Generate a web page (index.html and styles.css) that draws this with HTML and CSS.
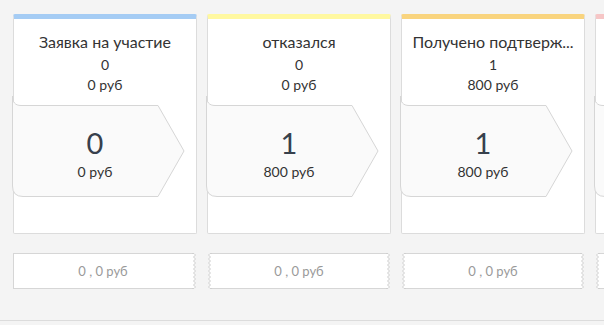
FILE: index.html
```html
<!DOCTYPE html>
<html>
<head>
  <title>Воронка</title>
  <link rel="stylesheet" href="styles.css">
</head>
<body>

<div class="board">

<div class="stages">

<div class="col">
  <div class="card bar-blue">
    <div class="title">Заявка на участие</div>
    <div class="line">0</div>
    <div class="line">0 руб</div>
    <div class="stage">
      <svg class="shape" width="175" height="94"><path d="M1.5,-8 C1.5,-2 4,1.5 10,1.5 L147,1.5 L173,47 L147,92.5 L12,92.5 Q1.5,92.5 1.5,82 Z"/></svg>
      <div class="big">0</div>
      <div class="line">0 руб</div>
    </div>
  </div>
  <div class="sum first">
    <span class="sum-text">0 , 0 руб</span>
    <svg class="edge" width="5" height="36"><polygon class="fill" points="0,0 2,0 3.5,2 1.5,4 3.5,6 1.5,8 3.5,10 1.5,12 3.5,14 1.5,16 3.5,18 1.5,20 3.5,22 1.5,24 3.5,26 1.5,28 3.5,30 1.5,32 3.5,34 2,36 0,36"/><polyline class="zig" points="0,0.5 2,0.5 3.5,2 1.5,4 3.5,6 1.5,8 3.5,10 1.5,12 3.5,14 1.5,16 3.5,18 1.5,20 3.5,22 1.5,24 3.5,26 1.5,28 3.5,30 1.5,32 3.5,34 2,35.5 0,35.5"/></svg>
  </div>
</div>

<div class="col">
  <div class="card bar-yellow">
    <div class="title">отказался</div>
    <div class="line">0</div>
    <div class="line">0 руб</div>
    <div class="stage">
      <svg class="shape" width="175" height="94"><path d="M1.5,-8 C1.5,-2 4,1.5 10,1.5 L147,1.5 L173,47 L147,92.5 L12,92.5 Q1.5,92.5 1.5,82 Z"/></svg>
      <div class="big">1</div>
      <div class="line">800 руб</div>
    </div>
  </div>
  <div class="sum">
    <svg class="edge" width="5" height="36"><polygon class="fill" points="5,0 3,0 1.5,2 3.5,4 1.5,6 3.5,8 1.5,10 3.5,12 1.5,14 3.5,16 1.5,18 3.5,20 1.5,22 3.5,24 1.5,26 3.5,28 1.5,30 3.5,32 1.5,34 3,36 5,36"/><polyline class="zig" points="5,0.5 3,0.5 1.5,2 3.5,4 1.5,6 3.5,8 1.5,10 3.5,12 1.5,14 3.5,16 1.5,18 3.5,20 1.5,22 3.5,24 1.5,26 3.5,28 1.5,30 3.5,32 1.5,34 3,35.5 5,35.5"/></svg>
    <span class="sum-text">0 , 0 руб</span>
    <svg class="edge" width="5" height="36"><polygon class="fill" points="0,0 2,0 3.5,2 1.5,4 3.5,6 1.5,8 3.5,10 1.5,12 3.5,14 1.5,16 3.5,18 1.5,20 3.5,22 1.5,24 3.5,26 1.5,28 3.5,30 1.5,32 3.5,34 2,36 0,36"/><polyline class="zig" points="0,0.5 2,0.5 3.5,2 1.5,4 3.5,6 1.5,8 3.5,10 1.5,12 3.5,14 1.5,16 3.5,18 1.5,20 3.5,22 1.5,24 3.5,26 1.5,28 3.5,30 1.5,32 3.5,34 2,35.5 0,35.5"/></svg>
  </div>
</div>

<div class="col">
  <div class="card bar-orange">
    <div class="title">Получено подтверж...</div>
    <div class="line">1</div>
    <div class="line">800 руб</div>
    <div class="stage">
      <svg class="shape" width="175" height="94"><path d="M1.5,-8 C1.5,-2 4,1.5 10,1.5 L147,1.5 L173,47 L147,92.5 L12,92.5 Q1.5,92.5 1.5,82 Z"/></svg>
      <div class="big">1</div>
      <div class="line">800 руб</div>
    </div>
  </div>
  <div class="sum">
    <svg class="edge" width="5" height="36"><polygon class="fill" points="5,0 3,0 1.5,2 3.5,4 1.5,6 3.5,8 1.5,10 3.5,12 1.5,14 3.5,16 1.5,18 3.5,20 1.5,22 3.5,24 1.5,26 3.5,28 1.5,30 3.5,32 1.5,34 3,36 5,36"/><polyline class="zig" points="5,0.5 3,0.5 1.5,2 3.5,4 1.5,6 3.5,8 1.5,10 3.5,12 1.5,14 3.5,16 1.5,18 3.5,20 1.5,22 3.5,24 1.5,26 3.5,28 1.5,30 3.5,32 1.5,34 3,35.5 5,35.5"/></svg>
    <span class="sum-text">0 , 0 руб</span>
    <svg class="edge" width="5" height="36"><polygon class="fill" points="0,0 2,0 3.5,2 1.5,4 3.5,6 1.5,8 3.5,10 1.5,12 3.5,14 1.5,16 3.5,18 1.5,20 3.5,22 1.5,24 3.5,26 1.5,28 3.5,30 1.5,32 3.5,34 2,36 0,36"/><polyline class="zig" points="0,0.5 2,0.5 3.5,2 1.5,4 3.5,6 1.5,8 3.5,10 1.5,12 3.5,14 1.5,16 3.5,18 1.5,20 3.5,22 1.5,24 3.5,26 1.5,28 3.5,30 1.5,32 3.5,34 2,35.5 0,35.5"/></svg>
  </div>
</div>

<div class="col">
  <div class="card bar-pink">
    <div class="title">&nbsp;</div>
    <div class="line">&nbsp;</div>
    <div class="line">&nbsp;</div>
    <div class="stage">
      <svg class="shape" width="175" height="94"><path d="M1.5,-8 C1.5,-2 4,1.5 10,1.5 L147,1.5 L173,47 L147,92.5 L12,92.5 Q1.5,92.5 1.5,82 Z"/></svg>
      <div class="big">&nbsp;</div>
      <div class="line">&nbsp;</div>
    </div>
  </div>
  <div class="sum">
    <svg class="edge" width="5" height="36"><polygon class="fill" points="5,0 3,0 1.5,2 3.5,4 1.5,6 3.5,8 1.5,10 3.5,12 1.5,14 3.5,16 1.5,18 3.5,20 1.5,22 3.5,24 1.5,26 3.5,28 1.5,30 3.5,32 1.5,34 3,36 5,36"/><polyline class="zig" points="5,0.5 3,0.5 1.5,2 3.5,4 1.5,6 3.5,8 1.5,10 3.5,12 1.5,14 3.5,16 1.5,18 3.5,20 1.5,22 3.5,24 1.5,26 3.5,28 1.5,30 3.5,32 1.5,34 3,35.5 5,35.5"/></svg>
    <span class="sum-text">&nbsp;</span>
  </div>
</div>

</div>

<div class="footer"></div>

</div>

</body>
</html>
```

FILE: styles.css
```css
body { margin: 0; background: #f4f4f4; font-family: Lato, "Open Sans", "DejaVu Sans", sans-serif; color: #333; }

.board { width: 604px; height: 325px; overflow: hidden; }
.stages { display: flex; gap: 10px; padding: 14px 0 0 13px; }
.col { flex: 0 0 184px; width: 184px; }

.card { background: #fff; border: 1px solid #dcdcdc; border-top: 5px solid #a5ccf4; border-radius: 2px; text-align: center; height: 214px; }
.bar-blue { border-top-color: #a5ccf4; }
.bar-yellow { border-top-color: #fff8a0; }
.bar-orange { border-top-color: #f9d47e; }
.bar-pink { border-top-color: #f6c6c6; }

.title { margin: 13px 10px 3px; font-size: 16px; line-height: 20px; white-space: nowrap; overflow: hidden; }
.line { font-size: 14px; line-height: 20px; }

.stage { position: relative; height: 94px; margin: 9px 0 0 -3px; padding-right: 3px; }
.stage .shape { position: absolute; left: 0; top: 0; overflow: visible; }
.shape path { fill: #fafafa; stroke: #d6d6d6; stroke-width: 1; }
.stage .big, .stage .line { position: relative; width: 168px; }
.big { padding-top: 22px; font-size: 29px; line-height: 34px; color: #37404c; }
.stage .line { margin-top: 2px; }

.sum { display: flex; height: 36px; margin-top: 19px; }
.sum-text { flex: 1; background: #fff; border-top: 1px solid #d6d6d6; border-bottom: 1px solid #d6d6d6; font-size: 13px; line-height: 34px; color: #9a9a9a; text-align: center; }
.sum.first .sum-text { border-left: 1px solid #d6d6d6; }
.edge { display: block; flex: 0 0 5px; }
.edge .fill { fill: #fff; }
.edge .zig { fill: none; stroke: #cfcfcf; stroke-width: 1; }

.footer { margin-top: 31px; border-top: 1px solid #dcdcdc; height: 6px; }
```
